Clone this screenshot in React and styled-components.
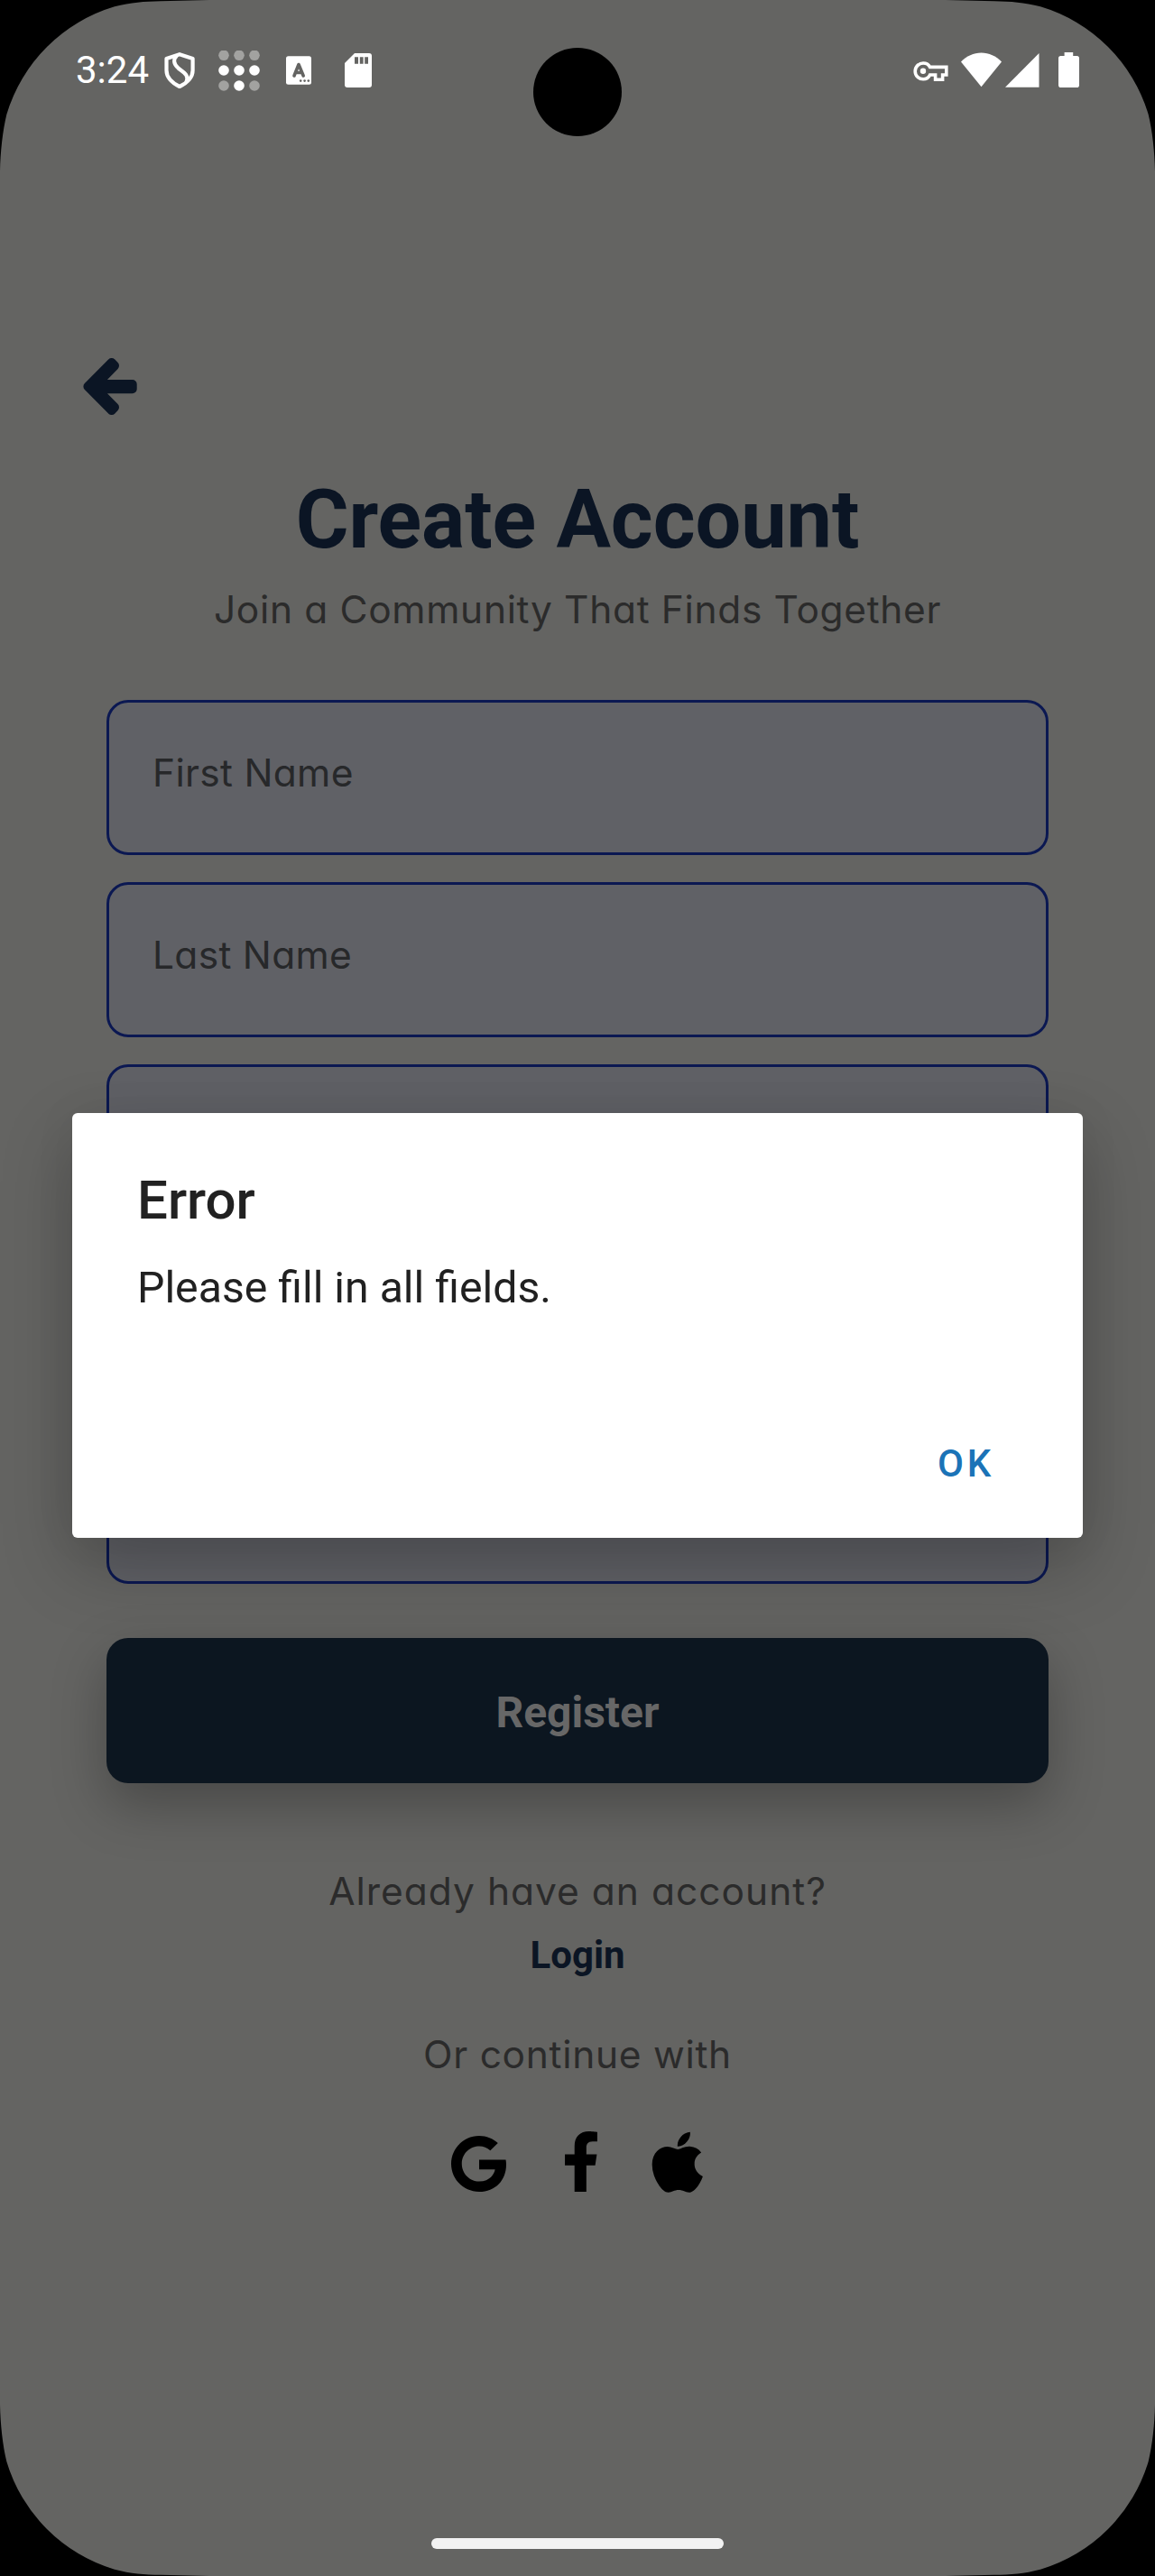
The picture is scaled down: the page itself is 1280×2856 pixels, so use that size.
import React from 'react';
import styled, { createGlobalStyle } from 'styled-components';
import { FaGoogle, FaFacebookF, FaApple } from 'react-icons/fa';

const GlobalStyle = createGlobalStyle`
  * { box-sizing: border-box; }
  html, body { margin: 0; padding: 0; background: #000; }
  body { font-family: Roboto, "Liberation Sans", sans-serif; }
`;

const Screen = styled.div`
  position: relative;
  width: 1280px;
  height: 2856px;
  overflow: hidden;
  background: #646462;
  display: flex;
  flex-direction: column;
`;

const StatusBar = styled.header`
  height: 156px;
  padding: 56px 84px 0 83px;
  display: flex;
  justify-content: space-between;
  align-items: flex-start;
  color: #fff;
`;

const StatusGroup = styled.div`
  display: flex;
  align-items: flex-start;
  svg { display: block; flex: none; }
`;

const Clock = styled.span`
  width: 99px;
  font-size: 42px;
  line-height: 43px;
  padding-left: 1px;
`;

const Camera = styled.div`
  position: absolute;
  left: 591px;
  top: 53px;
  width: 98px;
  height: 98px;
  border-radius: 50%;
  background: #000;
`;

const Corner = styled.svg`
  position: absolute;
  width: 232px;
  height: 192px;
  ${(p) => (p.$bottom ? 'bottom: 0;' : 'top: 0;')}
  ${(p) => (p.$right ? 'right: 0;' : 'left: 0;')}
  transform: scale(${(p) => (p.$right ? -1 : 1)}, ${(p) => (p.$bottom ? -1 : 1)});
`;

const BackButton = styled.button`
  margin: 241px 0 0 92px;
  padding: 0;
  border: 0;
  background: none;
  width: 60px;
  height: 63px;
  svg { display: block; }
`;

const Form = styled.main`
  padding: 63px 118px 0;
  display: flex;
  flex-direction: column;
  align-items: stretch;
`;

const Title = styled.h1`
  margin: 0;
  height: 106px;
  line-height: 107px;
  font-size: 90px;
  font-weight: 700;
  text-align: center;
  white-space: nowrap;
  letter-spacing: -0.06px;
  color: #0b1524;
`;

const Copy = styled.p`
  margin: ${(p) => p.$top || 0}px 0 0;
  height: 64px;
  line-height: 64px;
  font-family: Inter, "Open Sans", sans-serif;
  font-feature-settings: "cv11" 1;
  font-size: 42.5px;
  font-weight: 400;
  text-align: center;
  white-space: nowrap;
  letter-spacing: ${(p) => p.$track || 0}px;
  color: ${(p) => p.$color || '#2b2b2b'};
`;

const Fields = styled.div`
  margin-top: 68px;
  display: flex;
  flex-direction: column;
  gap: 30px;
`;

const Field = styled.div`
  height: 172px;
  padding: 46px 0 0 48px;
  border: 3px solid #0b1852;
  border-radius: 24px;
  background: #606166;
  display: flex;
`;

const Register = styled.button`
  margin-top: 60px;
  height: 161px;
  border: 0;
  border-radius: 24px;
  background: #0c1620;
  color: #676767;
  font: 700 48px/160px Roboto, sans-serif;
  padding: 3px 0 0;
  box-shadow: 0 24px 60px rgba(0, 0, 0, 0.28);
`;

const Login = styled.a`
  height: 50px;
  margin-top: 14px;
  font-size: 42px;
  line-height: 50px;
  font-weight: 700;
  text-align: center;
  color: #0b1524;
`;

const Socials = styled.div`
  display: flex;
  align-items: flex-start;
  justify-content: center;
  margin-top: 45px;
  height: 78px;
  color: #000;
`;

const Social = styled.span`
  display: flex;
  width: ${(p) => p.$w}px;
  margin: ${(p) => p.$top}px 0 0 ${(p) => p.$left}px;
  svg { display: block; width: ${(p) => p.$w}px; height: ${(p) => p.$h}px; }
`;

const Dialog = styled.section`
  position: absolute;
  left: 80px;
  top: 1234px;
  width: 1120px;
  height: 471px;
  padding: 65px 72px 0;
  border-radius: 6px;
  background: #fff;
  color: #212121;
  box-shadow: 0 30px 80px rgba(0, 0, 0, 0.24), 0 0 50px rgba(0, 0, 0, 0.05);
  display: flex;
  flex-direction: column;
`;

const DialogTitle = styled.h2`
  margin: 0;
  font-size: 60px;
  line-height: 64px;
  font-weight: 500;
`;

const DialogText = styled.p`
  margin: 37px 0 0;
  font-size: 48.2px;
  line-height: 56px;
`;

const DialogActions = styled.div`
  display: flex;
  justify-content: flex-end;
  margin-top: 142px;
  padding-right: 26px;
`;

const DialogAction = styled.button`
  border: 0;
  padding: 0;
  background: none;
  color: #1b73b7;
  font: 500 42px/50px Roboto, sans-serif;
  letter-spacing: 3.8px;
`;

const HomeBar = styled.div`
  position: absolute;
  left: 478px;
  top: 2814px;
  width: 324px;
  height: 12px;
  border-radius: 6px;
  background: #f2f2f2;
`;

const CORNER = 'M0 0H232L178 1.2C160 1.6 145 2.6 127 7.3A178 178 0 0 0 7.3 127C3 145 0.4 168 0 190Z';

const LeftIcons = () => (
  <svg width="232" height="50" viewBox="182 56 232 50" fill="#fff">
    <g fill="none" stroke="#fff" strokeWidth="4.2" strokeLinejoin="round">
      <path d="M199 60.2L213.6 65V78C213.6 86 207 92 199 96C191 92 184.5 86 184.5 78V65Z" />
      <path d="M196 61.5C191.5 66 192.5 71 197.5 75.5C203 80 210 83 206.5 91" />
    </g>
    {[248, 265, 282].map((x) =>
      [61.3, 78, 95].map((y) => (
        <circle key={`${x}-${y}`} cx={x} cy={y} r="5.8" fillOpacity={y === 78 || (x === 265 && y === 95) ? 1 : 0.4} />
      ))
    )}
    <rect x="317" y="62.3" width="28" height="31.4" rx="2.5" />
    <path d="M326 84L331 71.5L336.2 84M328 80.5H334.5" fill="none" stroke="#646462" strokeWidth="3.6" strokeLinecap="round" strokeLinejoin="round" />
    {[333.2, 337.6, 341.8].map((x) => (
      <circle key={x} cx={x} cy="89.6" r="1.3" fill="#646462" />
    ))}
    <path d="M393 59H409Q412 59 412 62V94Q412 97 409 97H385Q382 97 382 94V70Z" />
    <path d="M393 63.3H397V70.7H393ZM398.8 63.3H402.6V70.7H398.8ZM404.2 63.3H408V70.7H404.2Z" fill="#646462" />
  </svg>
);

const RightIcons = () => (
  <svg width="184" height="42" viewBox="1012 56 184 42" fill="#fff">
    <path
      d="M1030.6 74.4C1029.2 71.6 1026.6 70 1023.1 70A8.9 8.9 0 0 0 1023.1 87.8C1026.6 87.8 1029.2 86 1030.6 83H1036.6V88.2H1044.6V83H1048.8V74.4Z"
      fill="none"
      stroke="#fff"
      strokeWidth="3.6"
    />
    <circle cx="1023" cy="78.8" r="3.2" />
    <path d="M1087.5 96.3L1065 68.6C1071 62 1079 58.4 1087.5 58.4S1104 62 1110 68.6Z" />
    <path d="M1114 96.8L1151.5 59V96.8Z" />
    <path d="M1179.6 58H1189.2V62H1193.5Q1196 62 1196 64.5V94.2Q1196 97 1193.5 97H1175.5Q1173 97 1173 94.2V64.5Q1173 62 1175.5 62H1179.6Z" />
  </svg>
);

const placeholders = ['First Name', 'Last Name', '', '', ''];

export default function App() {
  return (
    <>
      <GlobalStyle />
      <Screen>
        <StatusBar>
          <StatusGroup>
            <Clock>3:24</Clock>
            <LeftIcons />
          </StatusGroup>
          <StatusGroup>
            <RightIcons />
          </StatusGroup>
        </StatusBar>
        <BackButton aria-label="Back">
          <svg width="60" height="63" viewBox="0 0 60 63">
            <path
              d="M5.4 31.5L31.7 5L35 8.5L15 29H54.7V34.3H15L35 54.5L31.7 58Z"
              fill="#0b1524"
              stroke="#0b1524"
              strokeWidth="10"
              strokeLinejoin="round"
            />
          </svg>
        </BackButton>
        <Form>
          <Title>Create Account</Title>
          <Copy $top={15} $track={0.65}>Join a Community That Finds Together</Copy>
          <Fields>
            {placeholders.map((label, i) => (
              <Field key={i}>
                <Copy $color="#27282a" $track={0.3}>{label}</Copy>
              </Field>
            ))}
          </Fields>
          <Register>Register</Register>
          <Copy $top={88} $track={1}>Already have an account?</Copy>
          <Login>Login</Login>
          <Copy $top={53} $track={0.7}>Or continue with</Copy>
          <Socials>
            <Social $w={61} $h={64} $top={12} $left={0}><FaGoogle /></Social>
            <Social $w={42} $h={67} $top={8} $left={62}><FaFacebookF /></Social>
            <Social $w={57.5} $h={76.5} $top={3.5} $left={57}><FaApple /></Social>
          </Socials>
        </Form>
        <Dialog role="alertdialog">
          <DialogTitle>Error</DialogTitle>
          <DialogText>Please fill in all fields.</DialogText>
          <DialogActions>
            <DialogAction>OK</DialogAction>
          </DialogActions>
        </Dialog>
        <HomeBar />
        <Camera />
        <Corner viewBox="0 0 232 192"><path d={CORNER} /></Corner>
        <Corner $right viewBox="0 0 232 192"><path d={CORNER} /></Corner>
        <Corner $bottom viewBox="0 0 232 192"><path d={CORNER} /></Corner>
        <Corner $right $bottom viewBox="0 0 232 192"><path d={CORNER} /></Corner>
      </Screen>
    </>
  );
}
